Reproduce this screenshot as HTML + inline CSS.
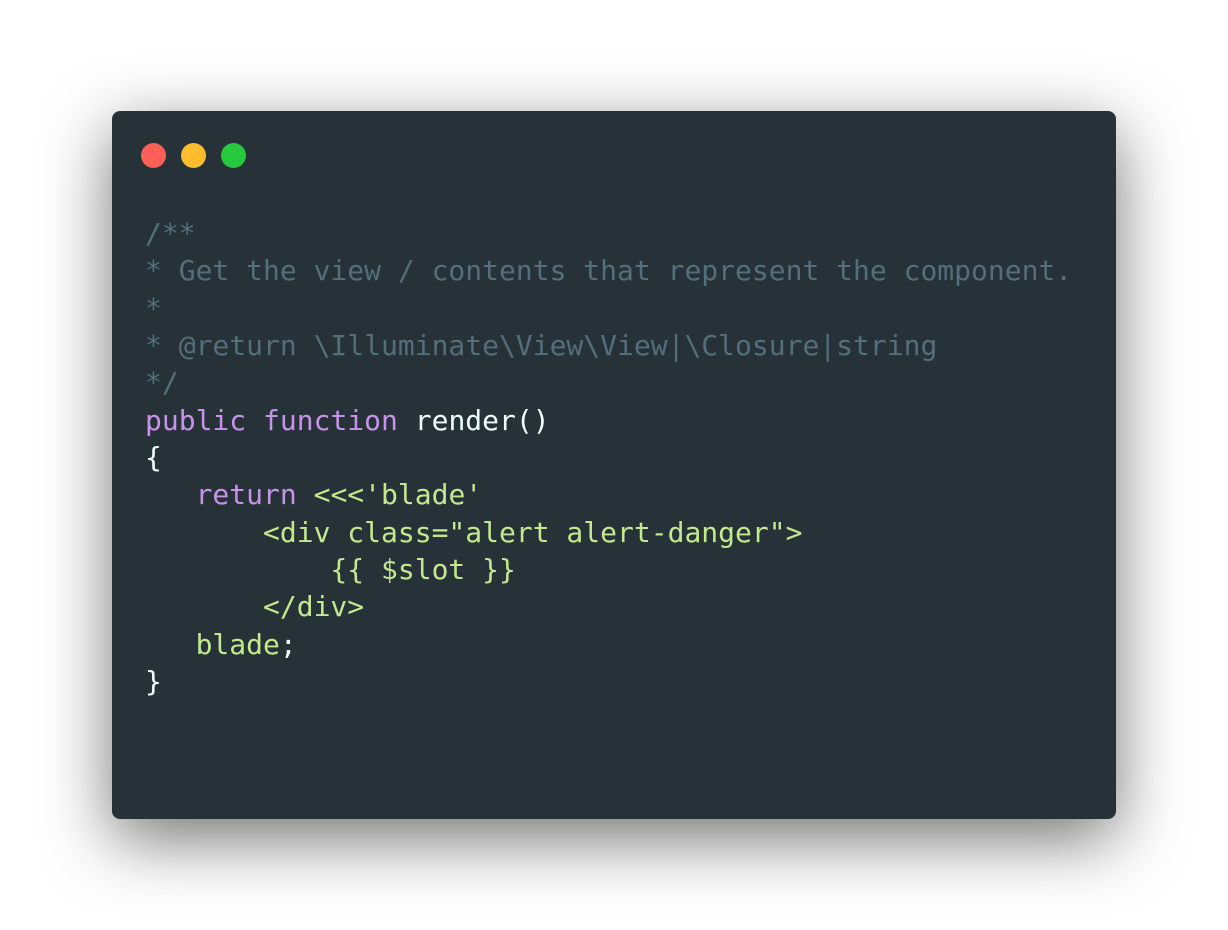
<!DOCTYPE html>
<html><head><meta charset="utf-8"><style>
html,body{margin:0;padding:0;background:#fff;width:1228px;height:930px;overflow:hidden}
.win{position:absolute;left:112px;top:111px;width:1004px;height:708px;background:#263238;border-radius:8px;box-shadow:0 20px 68px rgba(0,0,0,0.55)}
.dot{position:absolute;top:143px;width:25px;height:25px;border-radius:50%}
pre{position:absolute;left:145px;top:215px;margin:0;font-family:"DejaVu Sans Mono","Liberation Mono",monospace;font-size:28px;line-height:37.35px;color:#eeffff}
.c{color:#546e7a}.k{color:#c792ea}.s{color:#c3e88d}
</style></head><body>
<div class="win"></div>
<div class="dot" style="left:141px;background:#ff5f56"></div>
<div class="dot" style="left:181px;background:#ffbd2e"></div>
<div class="dot" style="left:221px;background:#27c93f"></div>
<pre><span class="c">/**
* Get the view / contents that represent the component.
*
* @return \Illuminate\View\View|\Closure|string
*/</span>
<span class="k">public</span> <span class="k">function</span> render()
{
   <span class="k">return</span> <span class="s">&lt;&lt;&lt;'blade'
       &lt;div class="alert alert-danger"&gt;
           {{ $slot }}
       &lt;/div&gt;
   blade</span>;
}</pre>
</body></html>
